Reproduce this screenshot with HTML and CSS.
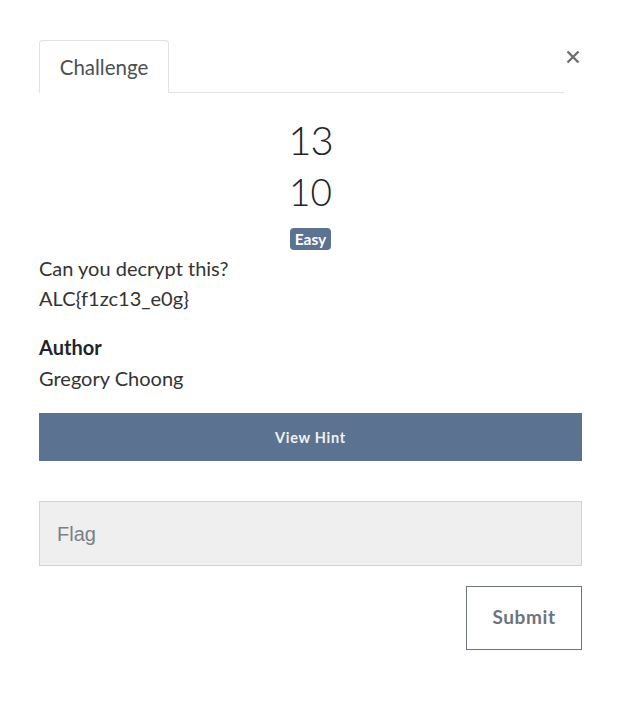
FILE: index.html
```html
<!DOCTYPE html>
<html>
<head>
<meta charset="utf-8">
<link rel="stylesheet" href="styles.css">
</head>
<body>
<div class="modal">
  <div class="top">
    <div class="tabs">
      <div class="tab">Challenge</div>
    </div>
    <button class="close" aria-label="Close">
      <svg width="14" height="14" viewBox="0 0 14 14"><path d="M1.5 1.5L12.5 12.5M12.5 1.5L1.5 12.5" stroke="#6f6f6f" stroke-width="2.4" stroke-linecap="butt"/></svg>
    </button>
  </div>
  <div class="head">
    <h2 class="name">13</h2>
    <h3 class="value">10</h3>
    <span class="badge">Easy</span>
  </div>
  <div class="desc">
    <p>Can you decrypt this?<br>ALC{f1zc13_e0g}</p>
    <h4 class="label">Author</h4>
    <p>Gregory Choong</p>
  </div>
  <button class="hint">View Hint</button>
  <input class="flag" type="text" placeholder="Flag">
  <div class="actions">
    <button class="submit">Submit</button>
  </div>
</div>
</body>
</html>
```
FILE: styles.css
```css
* { box-sizing: border-box; }
html, body { margin: 0; padding: 0; background: #fff; }
body { font-family: Lato, "Open Sans", sans-serif; color: #212529; }
.modal { width: 543px; margin: 40px 0 0 39px; display: flex; flex-direction: column; }
.top { display: flex; align-items: flex-start; }
.tabs { width: 525px; border-bottom: 1px solid #dee2e6; display: flex; }
.tab {
  width: 130px; height: 53px; margin-bottom: -1px;
  border: 1px solid #dee2e6; border-bottom-color: #fff;
  border-radius: 4px 4px 0 0; background: #fff;
  font-size: 20.5px; color: #495057; display: flex; align-items: center; justify-content: center;
  padding-top: 1px;
}
.close {
  margin-left: auto; margin-top: 10px; margin-right: 2px; width: 14px; height: 14px;
  background: none; border: 0; padding: 0; display: flex; cursor: pointer;
}
.head { display: flex; flex-direction: column; align-items: center; }
.name { font-weight: 300; font-size: 40px; line-height: 48px; margin: 23px 0 0; color: #212529; letter-spacing: -1px;}
.value { font-weight: 300; font-size: 37px; line-height: 44px; margin: 6px 0 0; color: #212529; }
.badge {
  margin-top: 14px; background: #5b7290; color: #fff; font-weight: 700; font-size: 15.5px;
  line-height: 22px; padding: 0 5px; border-radius: 4px; height: 22px;
}
.desc { margin-top: 3px; font-size: 20px; color: #333; }
.desc p { margin: 0; line-height: 30px; }
.label { margin: 20px 0 0; font-size: 20px; font-weight: 700; line-height: 28px; color: #212529; }
.desc p + .label + p { margin-top: 2px; }
.hint {
  margin-top: 20px; height: 48px; border: 0; background: #5b7290; color: #f0f2f5;
  font-family: Lato, sans-serif; font-weight: 700; font-size: 14.5px; letter-spacing: 0.7px;
}
.flag {
  margin-top: 40px; height: 65px; border: 1px solid #ced4da; background: #efefef;
  font-family: "Liberation Sans", Arial, sans-serif; font-size: 20px; padding: 2px 0 0 17px; color: #495057;
}
.flag::placeholder { color: #7a8086; }
.actions { display: flex; justify-content: flex-end; margin-top: 20px; }
.submit {
  width: 116px; height: 64px; background: #fff; border: 1px solid #6c757d; padding: 0 0 4px;
  font-family: Lato, sans-serif; font-weight: 700; font-size: 19px; color: #6c757d; letter-spacing: 0.6px;
}
```
